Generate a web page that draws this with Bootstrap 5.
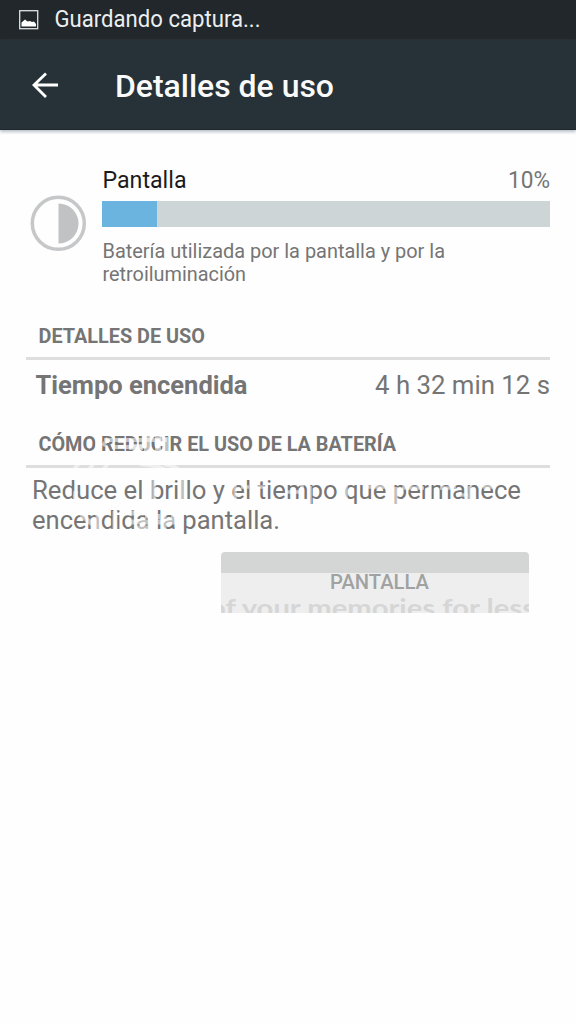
<!DOCTYPE html>
<html lang="es">
<head>
<meta charset="utf-8">
<meta name="viewport" content="width=device-width, initial-scale=1">
<title>Detalles de uso</title>
<link href="https://cdn.jsdelivr.net/npm/bootstrap@5.3.0/dist/css/bootstrap.min.css" rel="stylesheet">
<style>
body{font-family:Roboto,sans-serif;color:#757575;background:#fefefe;height:1024px;overflow:hidden}
.status{height:40px;background:#21272a;padding-left:19px}
.appbar{height:90px;background:#263238;border-bottom:1px solid #1d272c;box-shadow:0 2px 3px #b9bfca;padding-left:32px}
svg{display:block;flex:none}
svg text{font-family:Roboto,sans-serif}
.usage{padding:32px 26px 0 30px}
.meter{height:26px;border-radius:0;background:#cdd5d6}
.meter .progress-bar{background:#6cb4e0}
.rule{height:3px;background:#dedede;margin-left:26px;margin-right:26px}
.action{width:308px;height:61px;margin-left:221px;border-radius:4px 4px 1px 1px;background:linear-gradient(#d4d6d5 21px,#eee 21px);border:0;padding:0;overflow:hidden}
/* translucent watermark lying over the text */
.stamp{left:0;top:425px;pointer-events:none}
</style>
</head>
<body class="position-relative">
<header>
  <div class="status d-flex align-items-center">
    <svg width="20" height="20" viewBox="0 0 20 20"><rect x=".7" y=".7" width="18" height="18" fill="none" stroke="#dfe2e3" stroke-width="1.3"/><path d="M2.500 16.500v-4L6 9.500l2.500 2 2.500-.5 2 1 2-.5 2 2.500v2.500z" fill="#fff"/></svg>
    <svg width="240" height="40"><text x="15.500" y="27" font-size="23" fill="#eceff0" textLength="206" lengthAdjust="spacingAndGlyphs">Guardando captura...</text></svg>
  </div>
  <nav class="appbar d-flex align-items-center">
    <svg width="28" height="28" viewBox="0 0 28 28"><path d="M26 14H3M14 2.500L2 14l12 12" fill="none" stroke="#fff" stroke-width="2.800"/></svg>
    <svg width="300" height="90"><text x="55" y="57.300" font-size="31.500" font-weight="500" fill="#fafafa" textLength="219" lengthAdjust="spacingAndGlyphs">Detalles de uso</text></svg>
  </nav>
</header>
<main>
  <section class="usage d-flex">
    <svg class="mt-4" width="72" height="70"><circle cx="28.300" cy="37.300" r="26" fill="none" stroke="#c6c7c8" stroke-width="3.500"/><path d="M28.500 17.500a19.500 19.500 0 0 1 0 40z" fill="#c0c2c3"/></svg>
    <div class="flex-grow-1">
      <svg width="448" height="39"><text x="0.500" y="26" font-size="23.500" fill="#1b1b1b" textLength="84" lengthAdjust="spacingAndGlyphs">Pantalla</text><text x="406" y="26" font-size="23" textLength="42" lengthAdjust="spacingAndGlyphs" fill="#757575">10%</text></svg>
      <div class="progress meter" role="progressbar" aria-valuenow="10"><div class="progress-bar" style="width:12.200%"></div></div>
      <svg width="448" height="70" fill="#757575" font-size="20"><text x="0.500" y="31" textLength="342.500" lengthAdjust="spacingAndGlyphs">Batería utilizada por la pantalla y por la</text><text x="0.500" y="54" textLength="143.500" lengthAdjust="spacingAndGlyphs">retroiluminación</text></svg>
    </div>
  </section>
  <section>
    <svg width="576" height="60" fill="#757575"><text x="38.500" y="45.500" font-size="19.500" font-weight="700" textLength="166.500" lengthAdjust="spacingAndGlyphs">DETALLES DE USO</text></svg>
    <div class="rule"></div>
    <svg width="576" height="105" fill="#757575"><text x="35.500" y="33.500" font-size="25.500" font-weight="700" textLength="212" lengthAdjust="spacingAndGlyphs">Tiempo encendida</text><text x="375" y="33.500" font-size="25.500" textLength="175" lengthAdjust="spacingAndGlyphs">4 h 32 min 12 s</text><text x="38.500" y="90.500" font-size="19.500" font-weight="700" textLength="357.500" lengthAdjust="spacingAndGlyphs">CÓMO REDUCIR EL USO DE LA BATERÍA</text></svg>
    <div class="rule"></div>
    <svg width="576" height="84" fill="#757575" font-size="25.500"><text x="32" y="31" textLength="489" lengthAdjust="spacingAndGlyphs">Reduce el brillo y el tiempo que permanece</text><text x="32" y="61" textLength="248" lengthAdjust="spacingAndGlyphs">encendida la pantalla.</text></svg>
  </section>
  <button class="action d-block" type="button"><svg width="308" height="61"><text x="109" y="36.500" font-size="19.500" font-weight="500" fill="#a0a1a1" textLength="99" lengthAdjust="spacingAndGlyphs">PANTALLA</text><text x="-12" y="65" style="font-family:Lato,sans-serif" font-size="25" font-weight="700" fill="#d6d6d6" textLength="326" lengthAdjust="spacingAndGlyphs">of your memories for less</text></svg></button>
</main>
<svg class="stamp position-absolute" width="576" height="112" fill="none" stroke="#fefefe" stroke-opacity=".55" stroke-width="4">
  <path d="M97 12v14M80 36l-6 9M95 36l-6 9M108 13l-5 8M104 15h36M112 22h30M137 15h30M108 38l-4 6M140 39q16 1 24 5M164 39q8 1 14 5"/>
  <path d="M129 22h14M147 10v16M158 11v15M165 12v14" stroke-width="6"/>
  <path d="M76 66q-4 20 18 34M98 90v17M115 86v20M122 88h22M128 97h50M136 103h18M145 91h12M158 89v5M164 90v18M171 93h8" stroke-width="5"/>
  <path d="M154 51v26M161 57h8M182 51v26M235 60v14M241 62h8M258 62h10M285 67h16M302 59v18M310 61v20M346 61v14M365 62h28M396 62v22M402 63h22M430 60v17M440 63h16M456 70h12M470 61v17M483 62h10" stroke-width="3.500"/>
</svg>
</body>
</html>
